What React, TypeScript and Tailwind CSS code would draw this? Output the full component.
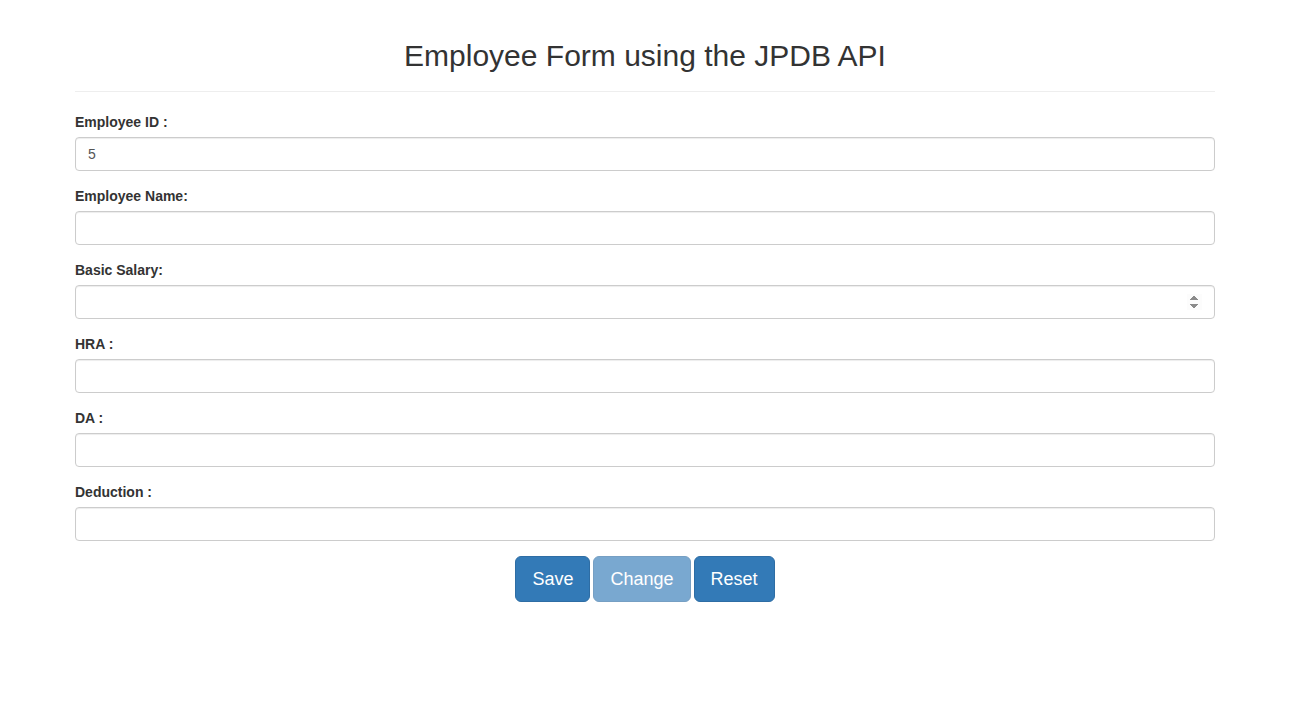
const fields = [
  { label: "Employee ID :", value: "5", type: "text" },
  { label: "Employee Name:", value: "", type: "text" },
  { label: "Basic Salary:", value: "", type: "number" },
  { label: "HRA :", value: "", type: "text" },
  { label: "DA :", value: "", type: "text" },
  { label: "Deduction :", value: "", type: "text" },
];

export default function App() {
  return (
    <div className="min-h-screen bg-white text-[#333] font-['Liberation_Sans',Arial,sans-serif] text-sm leading-[20px]">
      <div className="ml-[75px] w-[1140px]">
        <div className="pt-[39px] pb-[9px] border-b border-[#eee]">
          <h2 className="text-[30px] leading-[33px] text-center mb-[10px] font-normal">
            Employee Form using the JPDB API
          </h2>
        </div>
        <form className="mt-[20px]" onSubmit={(e) => e.preventDefault()}>
          {fields.map((f) => (
            <div key={f.label} className="mb-[15px]">
              <label className="block font-bold mb-[5px]">{f.label}</label>
              <input
                type={f.type}
                defaultValue={f.value}
                className="block w-full h-[34px] px-3 py-[6px] text-sm text-[#555] bg-white border border-[#ccc] rounded shadow-[inset_0_1px_1px_rgba(0,0,0,0.075)] outline-none [&::-webkit-inner-spin-button]:opacity-100"
              />
            </div>
          ))}
          <div className="flex justify-center gap-[3px]">
            <button className="px-4 py-[10px] text-[18px] leading-[24px] text-white bg-[#337ab7] border border-[#2e6da4] rounded-md">
              Save
            </button>
            <button disabled className="px-4 py-[10px] text-[18px] leading-[24px] text-white bg-[#337ab7] border border-[#2e6da4] rounded-md opacity-65">
              Change
            </button>
            <button className="px-4 py-[10px] text-[18px] leading-[24px] text-white bg-[#337ab7] border border-[#2e6da4] rounded-md">
              Reset
            </button>
          </div>
        </form>
      </div>
    </div>
  );
}
